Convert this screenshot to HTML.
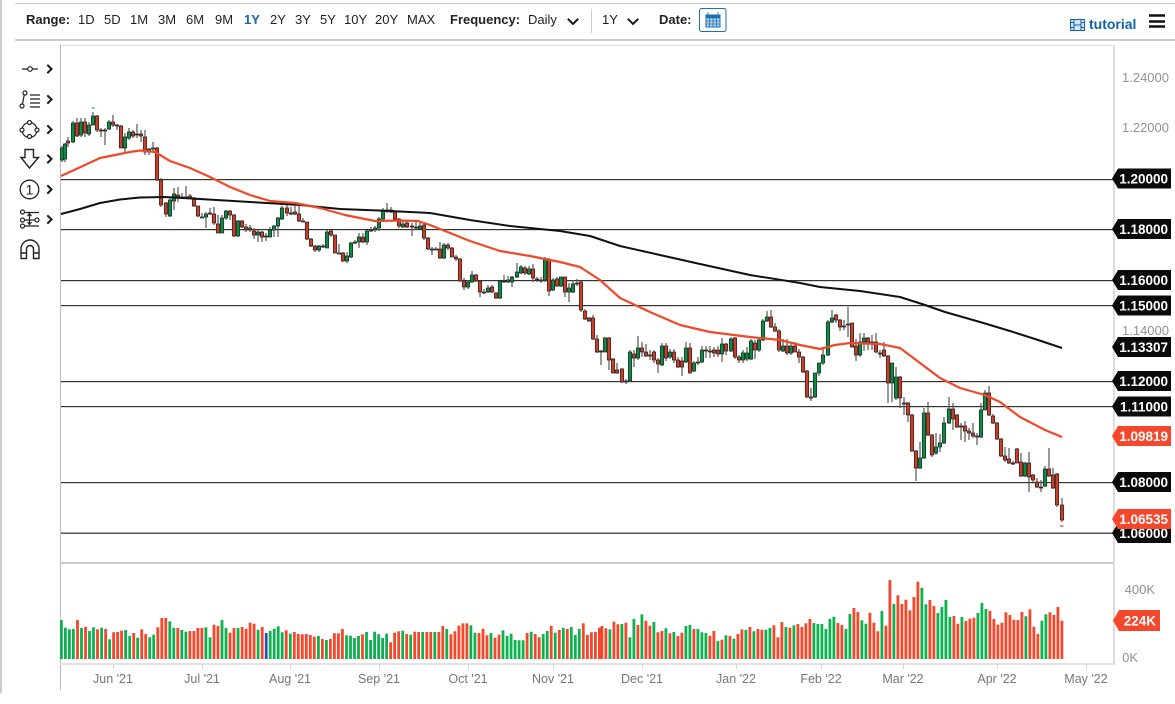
<!DOCTYPE html>
<html><head><meta charset="utf-8">
<style>
html,body{margin:0;padding:0;background:#fff;}
#w{position:relative;width:1175px;height:704px;overflow:hidden;font-family:"Liberation Sans",sans-serif;color:#222;font-size:13px;}
.t{position:absolute;white-space:nowrap;line-height:16px;top:12px;}
.b{font-weight:bold;}
.y{position:absolute;left:1122px;width:46px;text-align:right;color:#929292;font-size:13px;line-height:16px;}
.x{position:absolute;top:671px;width:70px;text-align:center;color:#777;font-size:12.5px;line-height:16px;}
.l{position:absolute;background:#ccc;}
svg{position:absolute;left:0;top:0;}
</style></head><body><div id="w">
<div class="l" style="left:0;top:0;width:2px;height:693px"></div>
<div class="l" style="left:15px;top:3px;width:1160px;height:1px"></div>
<div class="l" style="left:15px;top:39px;width:1160px;height:1.5px"></div>
<div class="l" style="left:60px;top:45px;width:1054px;height:1px;background:#ddd"></div>
<div class="l" style="left:60px;top:45px;width:1px;height:645px;background:#bbb"></div>
<div class="l" style="left:1113px;top:45px;width:1.5px;height:620px;background:#ddd"></div>
<div class="l" style="left:60px;top:562px;width:1053px;height:1.5px"></div>
<div class="l" style="left:60px;top:663px;width:1053px;height:2px;background:#e2e2e2"></div>

<span class="t b" style="left:26px">Range:</span>
<span class="t" style="left:78px">1D</span>
<span class="t" style="left:104px">5D</span>
<span class="t" style="left:130px">1M</span>
<span class="t" style="left:158px">3M</span>
<span class="t" style="left:186px">6M</span>
<span class="t" style="left:215px">9M</span>
<span class="t b" style="left:244px;color:#1565a8">1Y</span>
<span class="t" style="left:270px">2Y</span>
<span class="t" style="left:295px">3Y</span>
<span class="t" style="left:320px">5Y</span>
<span class="t" style="left:344px">10Y</span>
<span class="t" style="left:375px">20Y</span>
<span class="t" style="left:407px">MAX</span>
<span class="t b" style="left:450px">Frequency:</span>
<span class="t" style="left:528px">Daily</span>
<span class="t" style="left:602px">1Y</span>
<span class="t b" style="left:659px">Date:</span>
<span class="t b" style="left:1089px;top:16px;font-size:14px;color:#0f63a8">tutorial</span>

<span class="y" style="top:70px">1.24000</span>
<span class="y" style="top:120px">1.22000</span>
<span class="y" style="top:323px">1.14000</span>
<span class="y" style="top:582px;left:1109px">400K</span>
<span class="y" style="top:650px;left:1092px">0K</span>

<span class="x" style="left:78px">Jun '21</span>
<span class="x" style="left:167px">Jul '21</span>
<span class="x" style="left:255px">Aug '21</span>
<span class="x" style="left:344px">Sep '21</span>
<span class="x" style="left:433px">Oct '21</span>
<span class="x" style="left:518px">Nov '21</span>
<span class="x" style="left:607px">Dec '21</span>
<span class="x" style="left:701px">Jan '22</span>
<span class="x" style="left:786px">Feb '22</span>
<span class="x" style="left:868px">Mar '22</span>
<span class="x" style="left:962px">Apr '22</span>
<span class="x" style="left:1051px">May '22</span>

<svg width="1175" height="704" viewBox="0 0 1175 704" id="s" xmlns="http://www.w3.org/2000/svg" font-family="Liberation Sans, sans-serif">
<g fill="none" stroke="#1a1a1a" stroke-width="2" stroke-linecap="square">
<path d="M568.5 19.5l4.5 4.5 4.5-4.5M628.5 19.5l4.5 4.5 4.5-4.5"/>
<path d="M48 65.5l3.5 3.5-3.5 3.5M48 96l3.5 3.5-3.5 3.5M48 126l3.5 3.5-3.5 3.5M48 155.5l3.5 3.5-3.5 3.5M48 186l3.5 3.5-3.5 3.5M48 216l3.5 3.5-3.5 3.5"/>
</g>
<rect x="591" y="9" width="1" height="24" fill="#ccc"/>
<rect x="699.5" y="8.5" width="26.5" height="23" rx="2" fill="#fff" stroke="#1a6fb5"/>
<rect x="706" y="15" width="14" height="12" fill="#bcd8ef" stroke="#1a6fb5"/>
<path d="M706 15h14v3h-14zM708 12v4M718 12v4M709.500 18v9M713 18v9M716.500 18v9M706 21h14M706 24h14" fill="#1a6fb5" stroke="#1a6fb5" stroke-width=".8"/>
<g stroke="#0f63a8" fill="none"><rect x="1070.500" y="19.500" width="14" height="11" fill="#d6e6f3"/><path d="M1074 19.500v11M1081 19.500v11M1074 25h7M1070.500 22.500h3.500M1070.500 27.500h3.500M1081 22.500h3.500M1081 27.500h3.500"/></g>
<path d="M1149 15.500h16M1149 21.500h16M1149 26.500h16" stroke="#111" stroke-width="2.600"/>

<g fill="none" stroke="#222" stroke-width="1.200">
<path d="M22 69h5.500M32.500 69h5.500"/><circle cx="30" cy="69" r="2.300"/>
<circle cx="25" cy="93" r="2"/><circle cx="22" cy="106" r="2"/><path d="M24.200 95l-1.700 9"/>
<path d="M30 95h10M30 99h10M30 103h10M30 107h10" stroke-width="1.300"/>
<circle cx="29.500" cy="130" r="7.500"/><g fill="#fff"><circle cx="29.500" cy="122.500" r="2"/><circle cx="22" cy="130" r="2"/><circle cx="37" cy="130" r="2"/><circle cx="29.500" cy="136.500" r="2"/></g>
<path d="M25 149.500h8.500v8h5L29.500 168 21 157.500h4z" stroke-width="1.400"/>
<circle cx="29.500" cy="189.500" r="9.300" stroke-width="1.300"/>
<circle cx="22.500" cy="212" r="2"/><circle cx="22.500" cy="220" r="2"/><circle cx="22.500" cy="226" r="2"/><circle cx="37" cy="220" r="2"/>
<path d="M25 212.500h14M25 220h10M25 226h14M29.500 214v10M27.500 216l2-2.500 2 2.500M27.500 222l2 2.500 2-2.500"/>
<path d="M21 258.500V249a9 9 0 0 1 18 0v9.500h-5.500V249a3.500 3.500 0 0 0-7 0v9.500zM21 253h5.500M33.500 253H39" stroke-width="1.400"/>
</g>
<text x="29.500" y="194.500" font-size="14" fill="#222" text-anchor="middle">1</text>

<g id="grid" fill="#333">
<rect x="61" y="179" width="1052" height="1.200"/><rect x="61" y="229" width="1052" height="1.200"/><rect x="61" y="280" width="1052" height="1.200"/><rect x="61" y="305" width="1052" height="1.200"/><rect x="61" y="381" width="1052" height="1.200"/><rect x="61" y="406" width="1052" height="1.200"/><rect x="61" y="482" width="1052" height="1.200"/><rect x="61" y="532.500" width="1052" height="1.500" fill="#555"/>
</g>
<g id="ticks" fill="#d5d5d5"><rect x="113" y="664" width="1" height="5"/><rect x="202" y="664" width="1" height="5"/><rect x="290" y="664" width="1" height="5"/><rect x="379" y="664" width="1" height="5"/><rect x="468" y="664" width="1" height="5"/><rect x="553" y="664" width="1" height="5"/><rect x="642" y="664" width="1" height="5"/><rect x="736" y="664" width="1" height="5"/><rect x="821" y="664" width="1" height="5"/><rect x="903" y="664" width="1" height="5"/><rect x="997" y="664" width="1" height="5"/><rect x="1086" y="664" width="1" height="5"/></g>
<g id="vol"></g>
<g id="cand"></g>
<path fill="none" stroke="#111" stroke-width="2" stroke-linejoin="round" d="M61 214L80 209 100 203 120 199.500 140 197.500 165 197 200 199 250 202 300 205 340 209 390 211 430 213 470 220 510 226 560 231 590 236 620 246 660 255 700 264 750 275 800 283 820 287 860 291 900 297 925 305 945 312 980 322 1010 331 1035 339 1062 348"/>
<path fill="none" stroke="#f0492a" stroke-width="2.200" stroke-linejoin="round" d="M61 176L85 165 100 158 115 155 130 152 140 150.500 155 152 170 161 190 168 210 177 230 187 250 195 270 201 295 203 320 208 345 215 375 221 400 220.500 418 221 430 225 450 233 470 241 500 251 530 256 560 262 580 267 600 280 620 298 650 312 680 325 710 332 750 337 780 340 800 345 820 349 835 345 850 343 880 344 900 348 920 363 940 378 960 388 985 395 1000 402 1020 417 1045 430 1062 437"/>
<path d="M91.500 107.500l3.500 1" stroke="#4fcf8c" stroke-width="1.300"/>
<path d="M1060 526h3.500" stroke="#f0492a" stroke-width="1.300"/>

<g id="tags" font-size="13.500" font-weight="bold" text-anchor="end" fill="#fff"></g>
</svg>
</div>
<script>
var C=[
[-62,148,160,146,162],[-65,144,159,143,162],[68,141,143,137,147],[-73,123,142,121,143],[77,123,136,118,137],[-81,122,135,118,137],[85,122,133,118,137],[-89,125,134,122,136],[-93,116,125,112,125],[97,116,130,115,132],[101,130,131,128,137],[105,130,131,128,145],[-109,122,129,120,130],[113,122,125,115,127],[117,125,126,124,130],[121,126,148,125,148],[-125,137,148,133,152],[-129,132,138,128,140],[133,132,136,130,138],[137,134,135,124,138],[141,134,136,130,142],[145,137,152,130,155],[-149,149,152,148,155],[-153,148,149,142,152],[157,148,180,147,181],[161,180,205,178,207],[166,203,214,202,217],[-170,200,216,198,217],[-174,194,201,188,210],[178,195,198,187,202],[182,197,198,193,199],[186,197,198,186,199],[190,196,198,194,199],[194,198,206,197,207],[198,206,216,206,217],[202,217,218,213,218],[-206,214,217,212,228],[210,213,214,208,215],[214,214,223,207,225],[218,224,233,215,233],[-222,218,233,215,233],[-226,211,218,210,220],[230,211,215,210,220],[234,215,236,214,237],[-238,221,236,220,237],[242,221,227,220,228],[246,227,230,224,232],[250,228,230,225,232],[254,231,235,228,239],[-258,232,235,230,242],[262,232,237,231,242],[266,236,237,233,241],[-270,230,237,227,237],[-274,226,230,225,237],[-278,218,226,217,237],[-282,208,219,206,220],[287,208,213,205,216],[291,213,214,207,215],[295,212,214,206,215],[299,214,221,206,222],[303,221,222,218,222],[307,222,239,222,240],[311,239,246,238,247],[315,246,250,245,252],[-319,246,250,245,252],[323,246,247,244,248],[-327,232,248,230,248],[331,231,235,230,237],[335,235,253,235,253],[339,253,254,244,254],[343,253,261,252,262],[-347,256,261,252,263],[-351,243,257,242,258],[355,242,243,240,244],[-359,237,242,233,248],
[363,237,242,233,243],[-367,231,242,230,245],[371,230,231,227,232],[-375,228,230,226,232],[-379,219,228,217,231],[-383,211,219,208,221],[387,210,211,203,213],[391,210,212,207,213],[395,212,219,211,221],[399,219,226,218,228],[-403,224,227,220,228],[407,223,227,221,228],[412,226,227,223,236],[416,227,228,222,229],[-420,226,229,222,230],[424,225,238,224,240],[428,238,249,237,250],[432,249,250,247,255],[436,249,250,247,250],[440,249,258,242,259],[-444,245,258,243,259],[448,245,248,243,250],[452,248,257,247,257],[456,257,259,255,261],[460,259,281,258,282],[464,281,287,278,290],[-468,282,287,280,289],[-472,275,282,271,283],[476,275,281,274,282],[480,281,292,281,297],[484,292,293,289,294],[-488,288,292,285,293],[492,287,292,285,293],[496,293,298,292,299],[-500,281,298,281,299],[504,281,282,275,283],[-508,280,282,276,283],[-512,277,282,276,287],[-517,272,277,263,278],[-521,267,273,265,274],[525,268,273,266,275],[-529,269,274,266,275],[533,269,278,264,282],[537,279,280,277,282],[541,280,281,277,283],[-545,259,280,257,282],[549,260,291,258,296],[-553,280,290,278,291],[557,279,286,277,287],[-561,277,286,277,287],[565,277,292,277,297],[-569,288,292,283,302],[-573,284,292,280,293],[577,283,284,279,286],[581,282,310,281,312],[585,311,319,309,320],[589,318,321,317,322],[593,318,339,315,340],[597,339,352,335,353],[601,351,352,350,365],[-605,338,352,337,352],[609,338,360,337,370],[613,359,373,358,373],[617,370,373,363,374],[622,369,382,368,383],[626,381,382,379,384],[-630,352,381,350,382],[634,354,358,350,367],[-638,348,358,336,360],[642,348,352,342,357],[646,352,356,344,357],[650,355,356,350,360],[654,352,360,350,363],[658,360,364,358,373],
[-662,346,365,343,366],[666,346,358,343,361],[-670,352,357,349,359],[674,352,360,349,363],[678,360,367,357,368],[682,361,367,357,376],[-686,348,362,342,363],[690,348,373,343,373],[-694,363,371,361,372],[698,362,363,357,365],[-702,350,362,346,363],[706,350,351,346,358],[710,351,352,346,358],[714,350,353,347,357],[718,350,354,346,357],[-722,344,354,338,362],[726,344,351,343,355],[-731,339,351,337,352],[735,338,357,337,359],[739,357,360,355,363],[-743,353,360,350,363],[-747,353,359,347,361],[-751,341,359,339,360],[755,343,350,340,359],[-759,340,350,338,352],[-763,321,340,319,341],[-767,317,321,311,322],[771,317,327,310,328],[775,327,331,323,332],[779,331,350,329,352],[-783,346,351,339,352],[787,346,353,339,355],[-791,346,353,342,355],[795,346,352,342,352],[799,352,357,349,363],[803,357,372,356,373],[807,371,397,370,398],[811,397,398,388,401],[-815,373,397,373,398],[-819,363,373,363,376],[-823,355,363,347,365],
[-828,322,355,320,356],[-832,318,322,310,323],[836,315,320,314,323],[840,320,327,319,331],[844,326,327,320,330],[848,324,325,307,337],[852,323,347,323,347],[856,346,355,339,361],[-860,342,355,333,357],[-864,338,342,333,351],[868,338,342,337,350],[872,342,343,335,350],[876,342,352,333,353],[880,353,354,350,358],[884,350,356,342,357],[888,356,383,355,403],[-892,363,383,363,402],[-896,377,398,367,400],[900,377,398,376,408],[904,403,404,397,415],[908,403,415,402,422],[912,415,451,414,452],[916,451,468,450,481],[-920,458,468,442,469],[-924,413,458,408,459],[928,413,435,402,436],[932,435,455,434,457],[-936,447,453,433,455],[-940,443,447,434,452],[-944,423,443,417,444],[-949,409,423,397,424],[953,409,419,403,430],[957,415,427,414,428],[961,426,427,423,440],[965,426,431,421,442],[969,431,433,428,440],[973,433,436,423,438],[977,436,437,433,445],[-981,410,437,403,438],[-985,393,410,390,410],[989,393,415,386,416],[993,416,423,414,424],[997,423,439,422,440],[1001,439,456,438,457],[1005,456,460,447,462],[1009,459,463,448,464],[1013,463,464,461,465],[1017,449,463,448,463],[1021,462,476,453,477],[-1025,463,476,462,477],[1029,463,477,452,492],[1033,475,480,474,482],[1037,482,487,478,488],[1041,487,488,480,492],[-1045,469,486,466,487],[1049,469,476,448,477],[1053,475,488,468,489],[1057,474,505,473,507],[1062,505,520,498,522]];
var V1="G180 G203 G208 G207 R180 G204 R200 G213 G202 R208 G203 R207 G238 R217 R216 R212 G210 G228 R219 G233 R208 R222 G232 G224 R202 R174 R174 G184 G203 R204 G210 G215 R213 R213 R204 R204 G202 G232 R194 R198 G180 G204 R218 R204 G204 R201 R206 R188 R191 G209 R201 B219 G213 G206 G199 G217 R211 G221 R216 R222 R223 R222 R225 R230 G228 R237 G240 R237 R220 R220 R207 G226 G227 G234 G228 R223 G216 G240 G215 G223 G234 G221 R247 R218 R214 G212 R222 G224 R215 R216 G216 R216 R216 G216 R216 R198 G207 R223 R214 R197 R190 R190 G196 G218 R219 R206 R226 G219 R233 R224 G211 G228 G221 G240 G241 G241 R219 G215 R222 R232 G222 G213 R197 G218 R210 G204 R207 G201 G225 G207 R190 R225 R217 R216 R203".split(" ");
var V2="R198 R205 G208 R185 R193 G192 R188 G232 G177 R195 G163 R182 R197 G186 R217 R213 G205 R220 G216 R228 R218 G198 G195 R207 G207 G217 G219 R227 R213 G243 R239 G226 R228 G236 R222 R208 G210 R201 G214 R207 R209 G209 G204 R196 R232 R186 G201 R203 G196 R192 R201 R190 R177 G189 G192 G192 G207 G177 G170 R189 R195 G207 G162 R144 R156 G181 G191 R158 R188 R214 G153 R197 R60 G132 R106 R132 R119 R151 R111 R65 G83 G133 R120 R138 G159 G141 G120 G171 R168 R191 G171 R183 R176 R173 G159 G129 G147 R152 R177 R194 R188 R157 R165 R179 R180 R156 G169 R148 R200 R222 G182 G163 R157 R165 R141 R182".split(" ");
var h="",col={G:"#0db14f",R:"#f4472b",B:"#2b4fb5"};
function bar(x,s){var t=560+(+s.slice(1))/3;h+='<rect x="'+(x-1.5).toFixed(1)+'" y="'+t.toFixed(1)+'" width="2.8" height="'+(659-t).toFixed(1)+'" fill="'+col[s[0]]+'"/>';}
V1.forEach(function(s,i){bar(61.5+i*4.015,s)});
V2.forEach(function(s,i){bar(1062-(V2.length-1-i)*4,s)});
document.getElementById("vol").innerHTML=h;
h="";
C.forEach(function(c){var g=c[0]<0,x=Math.abs(c[0]);
h+='<path d="M'+x+' '+c[3]+'V'+c[4]+'" stroke="#555" stroke-width="1.200"/><rect x="'+(x-1.7)+'" y="'+c[1]+'" width="3.4" height="'+(c[2]-c[1])+'" fill="'+(g?"#0b8b45":"#c63f28")+'" stroke="#222" stroke-width=".7"/>';});
document.getElementById("cand").innerHTML=h;
h="";
[[178.5,"1.20000",0],[229,"1.18000",0],[280,"1.16000",0],[305.5,"1.15000",0],[347,"1.13307",0],[381,"1.12000",0],[406.5,"1.11000",0],[533,"1.06000",0],[482,"1.08000",0],[436,"1.09819",1],[519,"1.06535",1]].forEach(function(a){var y=a[0],f=a[2]?"#f4472b":"#0a0a0a";
h+='<path d="M1112 '+y+'l6-10h53v20h-53z" fill="'+f+'"/><text x="1168" y="'+(y+5)+'">'+a[1]+'</text>';});
h+='<path d="M1113 620.500l6-10.500h41v21h-41z" fill="#f4472b"/><text x="1156" y="625.500">224K</text>';
document.getElementById("tags").innerHTML=h;
</script>
</body></html>
